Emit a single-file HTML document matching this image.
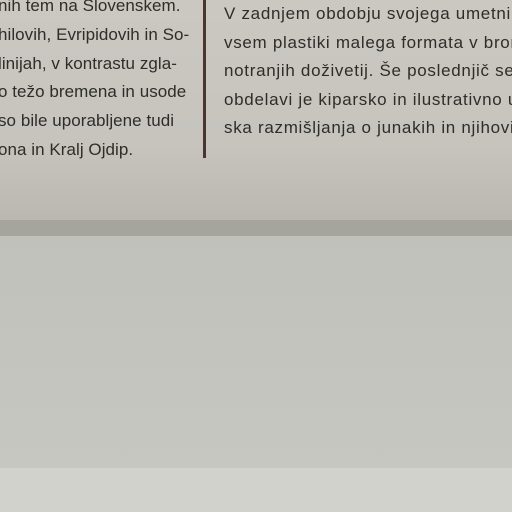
<!DOCTYPE html>
<html><head><meta charset="utf-8"><style>
html,body{margin:0;padding:0}
body{width:512px;height:512px;position:relative;overflow:hidden;background:#c8c8c2;font-family:"Liberation Sans",sans-serif}
.top{position:absolute;left:0;top:0;width:512px;height:222px;background:linear-gradient(#cac8c1 0%,#c6c4bd 65%,#b9b8b0 100%)}
.band{position:absolute;left:0;top:220px;width:512px;height:16px;background:#a6a59d}
.mid{position:absolute;left:0;top:236px;width:512px;height:232px;background:linear-gradient(#c1c1bb,#c7c7c1)}
.bot{position:absolute;left:0;top:468px;width:512px;height:44px;background:#d1d2cc}
.line{position:absolute;left:203px;top:0;width:3px;height:158px;background:#4a3530}
.t{position:absolute;font-size:17px;color:#2e2d2a;white-space:nowrap;letter-spacing:0.05px}
.r{letter-spacing:0.7px}
</style></head><body>
<div class="top"></div><div class="band"></div><div class="mid"></div><div class="bot"></div>
<div class="line"></div>
<div class="t" style="left:-2px;top:-4px">nih tem na Slovenskem.</div>
<div class="t" style="left:-2px;top:25px">hilovih, Evripidovih in So-</div>
<div class="t" style="left:-2px;top:54px">linijah, v kontrastu zgla-</div>
<div class="t" style="left:-2px;top:82px">o težo bremena in usode</div>
<div class="t" style="left:-2px;top:111px">so bile uporabljene tudi</div>
<div class="t" style="left:-2px;top:140px">ona in Kralj Ojdip.</div>
<div class="t r" style="left:224px;top:4px">V zadnjem obdobju svojega umetni</div>
<div class="t r" style="left:224px;top:33px">vsem plastiki malega formata v bron</div>
<div class="t r" style="left:224px;top:61px">notranjih doživetij. Še poslednjič se</div>
<div class="t r" style="left:224px;top:90px">obdelavi je kiparsko in ilustrativno u</div>
<div class="t r" style="left:224px;top:118px">ska razmišljanja o junakih in njihovih</div>
</body></html>
